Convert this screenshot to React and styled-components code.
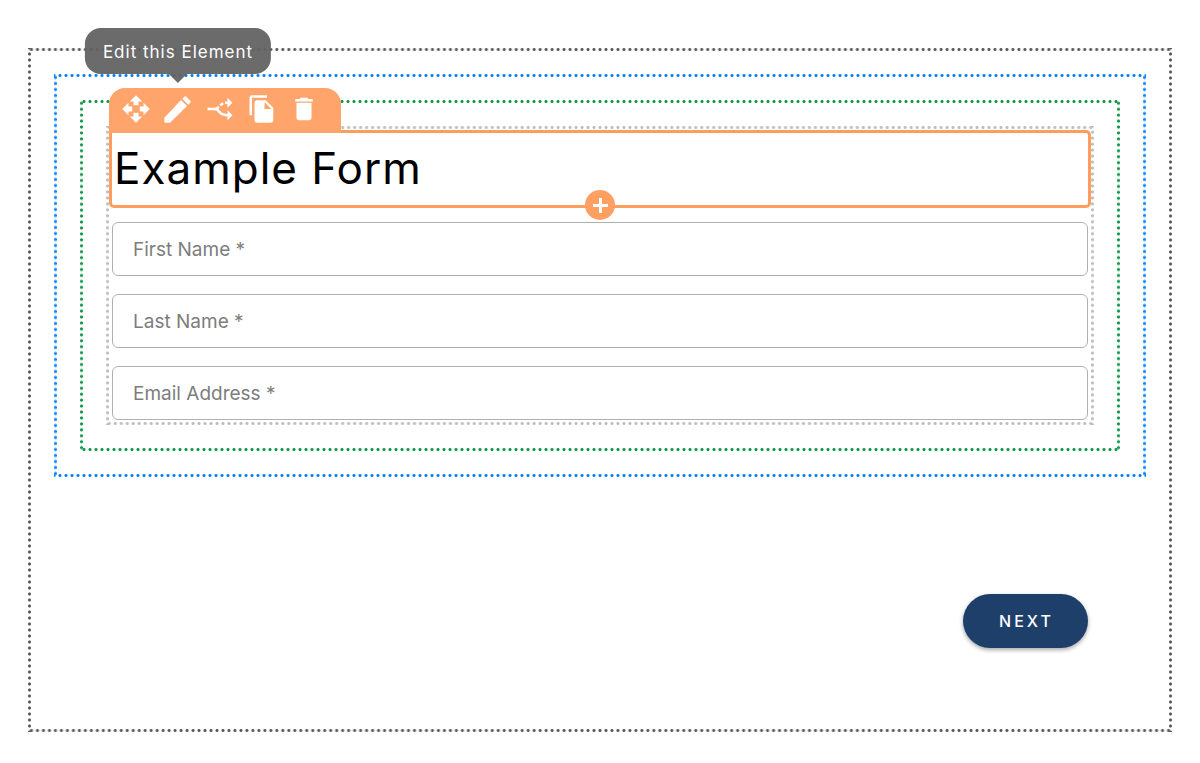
import React from "react";
import styled, { createGlobalStyle, css } from "styled-components";
import { MdAltRoute, MdDelete, MdFileCopy, MdOpenWith } from "react-icons/md";

const GlobalStyle = createGlobalStyle`
  *, *::before, *::after { box-sizing: border-box; }
  body {
    margin: 0;
    background: #fff;
    color: #000;
    font-family: Inter, "Liberation Sans", sans-serif;
  }
  button, input { font: inherit; }
`;

const Canvas = styled.main`
  padding: 48px 28px 31px;
`;

/* Round dots along each edge, spaced evenly at any size. */
const dotted = css`
  --dot: radial-gradient(circle, ${(p) => p.$color} 1px, transparent 2px);
  border: 3px solid transparent;
  background:
    var(--dot) top / 6px 3px round no-repeat border-box,
    var(--dot) bottom / 6px 3px round no-repeat border-box,
    var(--dot) left / 3px 6px no-repeat round border-box,
    var(--dot) right / 3px 6px no-repeat round border-box;
`;

const PageFrame = styled.div`
  ${dotted}
  padding: 23px 23px 81px;
`;

const Frame = styled.div`
  ${dotted}
  padding: 23px;
`;

const FormFrame = styled.form`
  ${dotted}
  display: flex;
  flex-direction: column;
  gap: 18px;
  padding: 1px 0 2px;
`;

const SelectedElement = styled.section`
  position: relative;
  margin-bottom: -4px;
  border: 3px solid #ff9d5c;
  border-radius: 0 5px 5px 5px;
  padding: 7px 2px 9px;
`;

const Title = styled.h1`
  margin: 0;
  font-size: 44px;
  line-height: 56px;
  font-weight: 400;
  letter-spacing: 1px;
`;

const Toolbar = styled.div`
  position: absolute;
  left: -3px;
  bottom: 100%;
  display: flex;
  gap: 12px;
  width: 232px;
  height: 45px;
  padding: 6px 12px 8px;
  border-radius: 16px 16px 0 0;
  background: #ffa46b;
`;

const ToolButton = styled.button`
  position: relative;
  display: flex;
  width: 30px;
  height: 30px;
  padding: 0;
  border: 0;
  background: none;
  color: #fff;
  cursor: pointer;

  svg {
    width: 30px;
    height: 30px;
    transform: rotate(${(p) => p.$turn || 0}deg);
  }
`;

const Tooltip = styled.span`
  position: absolute;
  left: 50%;
  bottom: calc(100% + 20px);
  transform: translateX(-50%);
  padding: 3px 18px 1px;
  border-radius: 16px;
  background: rgba(98, 98, 98, 0.94);
  color: #fff;
  font-size: 17px;
  line-height: 42px;
  letter-spacing: 1px;
  white-space: nowrap;

  &::after {
    content: "";
    position: absolute;
    top: 100%;
    left: 50%;
    margin-left: -9px;
    border: 9px solid transparent;
    border-top-color: rgba(98, 98, 98, 0.94);
    border-bottom: 0;
  }
`;

const AddButton = styled.button`
  position: absolute;
  left: 50%;
  top: 100%;
  display: flex;
  align-items: center;
  justify-content: center;
  width: 30px;
  height: 30px;
  margin: -15px 0 0 -15px;
  padding: 0;
  border: 0;
  border-radius: 50%;
  background: #ffa062;
  cursor: pointer;
`;

const Field = styled.div`
  display: grid;
  align-items: center;
  margin: 0 3px;

  > * { grid-area: 1 / 1; }
`;

const FieldLabel = styled.label`
  padding: 2px 0 0 21px;
  color: #7d7d7d;
  font-size: 19px;
  line-height: 24px;
  pointer-events: none;
`;

const FieldInput = styled.input`
  width: 100%;
  height: 54px;
  padding: 0 20px;
  border: 1px solid #b0b0b0;
  border-radius: 6px;
  background: #fff;
`;

const Actions = styled.div`
  display: flex;
  justify-content: flex-end;
  padding: 117px 58px 0 0;
`;

const NextButton = styled.button`
  width: 125px;
  height: 54px;
  padding: 0 0 0 2px;
  border: 0;
  border-radius: 27px;
  background: #1f3f6b;
  color: #fff;
  font-size: 16px;
  font-weight: 500;
  letter-spacing: 3px;
  box-shadow: 0 2px 4px rgba(0, 0, 0, 0.35);
  cursor: pointer;
`;

const PencilIcon = () => (
  <svg viewBox="0 0 90 90" fill="currentColor" overflow="visible" aria-hidden="true">
    <path d="M4 71 54 18 72 36 21 86H7Q4 86 4 83Z" />
    <path d="M58 14 64 8Q67 5 70 8L82 20Q85 23 82 26L76 32Z" />
  </svg>
);

const PlusIcon = () => (
  <svg width="15" height="15" viewBox="0 0 15 15" fill="#fff" aria-hidden="true">
    <path d="M6 0h3v6h6v3H9v6H6V9H0V6h6Z" />
  </svg>
);

const fields = [
  { id: "first-name", label: "First Name *", complete: "given-name" },
  { id: "last-name", label: "Last Name *", complete: "family-name" },
  { id: "email", label: "Email Address *", type: "email", complete: "email" },
];

export default function App() {
  return (
    <>
      <GlobalStyle />
      <Canvas>
        <PageFrame $color="#555">
          <Frame $color="#0080ff">
            <Frame $color="#069540">
              <FormFrame $color="#bbb" id="example-form">
                <SelectedElement>
                  <Toolbar role="toolbar" aria-label="Element tools">
                    <ToolButton type="button" aria-label="Move"><MdOpenWith /></ToolButton>
                    <ToolButton type="button" aria-describedby="edit-tip" aria-label="Edit">
                      <PencilIcon />
                      <Tooltip id="edit-tip" role="tooltip">Edit this Element</Tooltip>
                    </ToolButton>
                    <ToolButton type="button" aria-label="Logic" $turn={90}><MdAltRoute /></ToolButton>
                    <ToolButton type="button" aria-label="Duplicate"><MdFileCopy /></ToolButton>
                    <ToolButton type="button" aria-label="Delete"><MdDelete /></ToolButton>
                  </Toolbar>
                  <Title>Example Form</Title>
                  <AddButton type="button" aria-label="Add element"><PlusIcon /></AddButton>
                </SelectedElement>
                {fields.map((f) => (
                  <Field key={f.id}>
                    <FieldInput id={f.id} type={f.type || "text"} autoComplete={f.complete} required />
                    <FieldLabel htmlFor={f.id}>{f.label}</FieldLabel>
                  </Field>
                ))}
              </FormFrame>
            </Frame>
          </Frame>
          <Actions>
            <NextButton type="submit" form="example-form">NEXT</NextButton>
          </Actions>
        </PageFrame>
      </Canvas>
    </>
  );
}
